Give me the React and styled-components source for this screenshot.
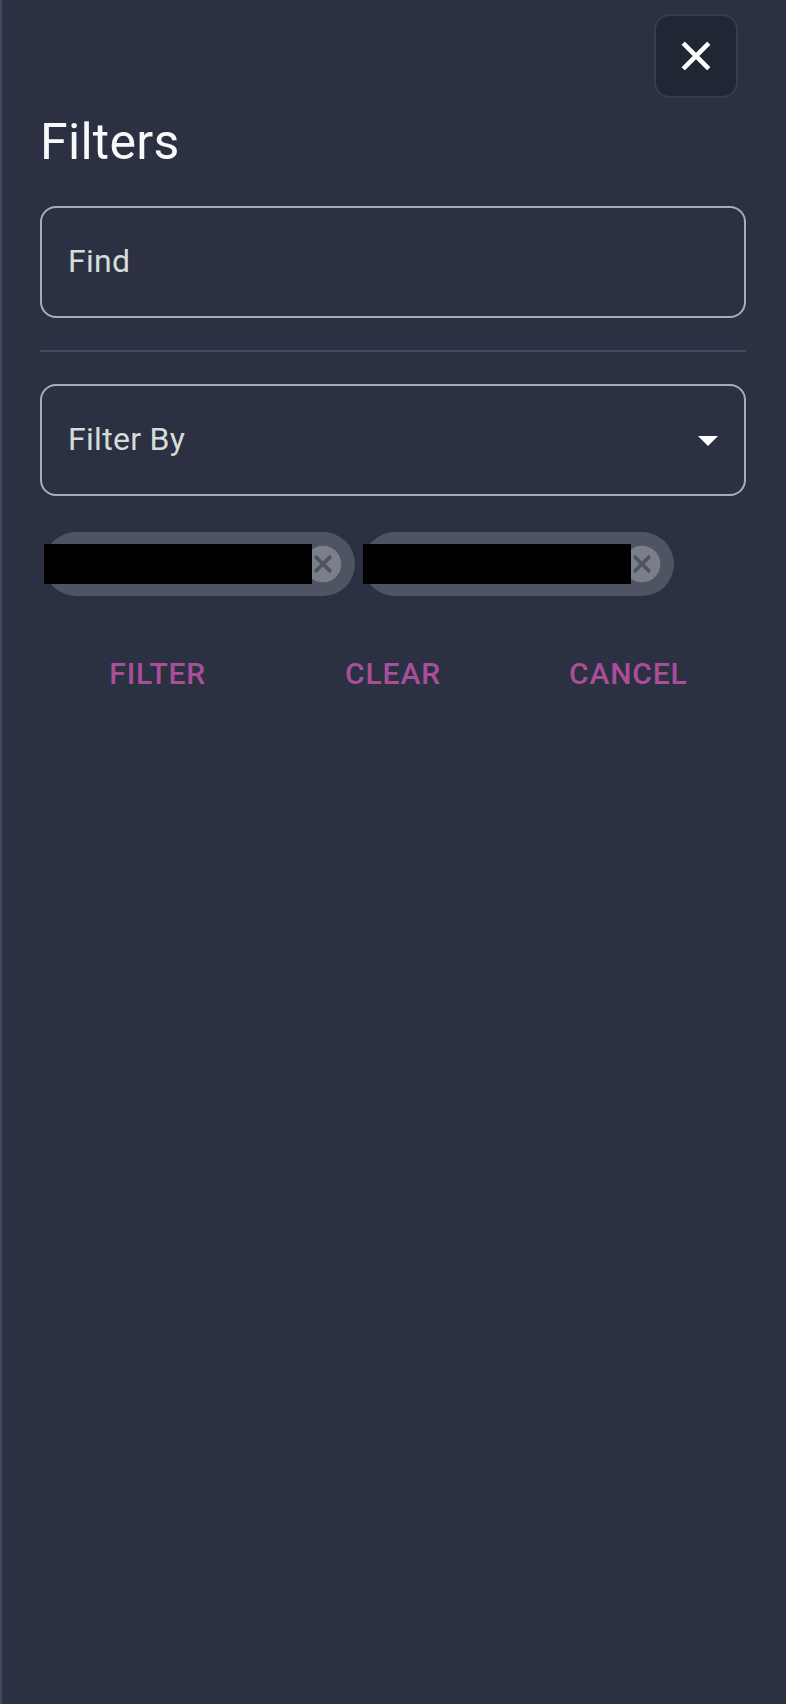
import React from "react";
import styled, { createGlobalStyle } from "styled-components";

const GlobalStyle = createGlobalStyle`
  *, *::before, *::after { box-sizing: border-box; }
  body { margin: 0; background: #2b3143; }
  button, input, select { font: inherit; letter-spacing: inherit; margin: 0; }
`;

const Drawer = styled.aside`
  min-height: 100vh;
  padding: 14px 40px 40px 38px;
  border-left: 2px solid #42475c;
  background: #2b3143;
  color: #f8f9fa;
  font-family: Roboto, "Liberation Sans", sans-serif;
  font-size: 32px;
  letter-spacing: 0.00938em;
`;

const TopBar = styled.div`
  display: flex;
  justify-content: flex-end;
  padding-right: 8px;
`;

const CloseButton = styled.button`
  display: flex;
  align-items: center;
  justify-content: center;
  width: 84px;
  height: 84px;
  padding: 0;
  border: 2px solid #393d4b;
  border-radius: 16px;
  background: #202634;
  color: #fff;
  cursor: pointer;
`;

const Title = styled.h1`
  margin: 8px 0 28px;
  font-size: 50px;
  font-weight: 400;
  line-height: 72px;
`;

const Fields = styled.form`
  display: flex;
  flex-direction: column;
`;

const Outline = styled.div`
  display: flex;
  position: relative;
  height: 112px;
  border: 2px solid #abadb4;
  border-radius: 16px;
`;

const TextField = styled.input`
  width: 100%;
  padding: 0 26px 2px;
  border: 0;
  border-radius: 14px;
  outline: 0;
  background: transparent;
  color: #d4ddd8;
  &::placeholder { color: #d4ddd8; opacity: 1; }
`;

const SelectField = styled.select`
  width: 100%;
  padding: 0 80px 2px 26px;
  border: 0;
  border-radius: 14px;
  outline: 0;
  appearance: none;
  background: transparent;
  color: #d4ddd8;
`;

const SelectArrow = styled.svg`
  position: absolute;
  top: 30px;
  right: 12px;
  pointer-events: none;
`;

const Divider = styled.hr`
  width: 100%;
  height: 2px;
  margin: 32px 0;
  border: 0;
  background: #454a5e;
`;

const Chips = styled.ul`
  display: flex;
  flex-wrap: wrap;
  gap: 8px;
  margin: 36px 0 0;
  padding: 0 4px;
  list-style: none;
`;

const Chip = styled.li`
  display: flex;
  align-items: center;
  height: 64px;
  padding-right: 10px;
  border-radius: 32px;
  background: #4e5461;
`;

const ChipLabel = styled.span`
  z-index: 1;
  width: 268px;
  height: 40px;
  background: #000;
`;

const ChipDelete = styled.button`
  display: flex;
  margin-left: -11px;
  padding: 0;
  border: 0;
  background: transparent;
  color: #7b7f8a;
  cursor: pointer;
`;

const Actions = styled.div`
  display: grid;
  grid-template-columns: repeat(3, 1fr);
  margin-top: 40px;
`;

const ActionButton = styled.button`
  height: 74px;
  padding: 0;
  border: 0;
  background: transparent;
  color: #a94f98;
  font-size: 30px;
  font-weight: 500;
  letter-spacing: 0.02857em;
  text-transform: uppercase;
  cursor: pointer;
`;

const chips = ["first", "second"];
const actions = ["Filter", "Clear", "Cancel"];

export default function App() {
  return (
    <>
      <GlobalStyle />
      <Drawer>
        <TopBar>
          <CloseButton type="button" aria-label="Close">
            <svg width="48" height="48" viewBox="0 0 24 24" fill="currentColor" stroke="currentColor" strokeWidth="0.4" strokeLinejoin="round" aria-hidden="true">
              <path d="M19 6.41 17.59 5 12 10.59 6.41 5 5 6.41 10.59 12 5 17.59 6.41 19 12 13.41 17.59 19 19 17.59 13.41 12z" />
            </svg>
          </CloseButton>
        </TopBar>
        <Title>Filters</Title>
        <Fields onSubmit={(e) => e.preventDefault()}>
          <Outline>
            <TextField type="text" aria-label="Find" placeholder="Find" />
          </Outline>
          <Divider />
          <Outline>
            <SelectField aria-label="Filter By" defaultValue="">
              <option value="">Filter By</option>
            </SelectField>
            <SelectArrow width="48" height="48" viewBox="0 0 24 24" fill="#fff" aria-hidden="true">
              <path d="m7 10 5 5 5-5z" />
            </SelectArrow>
          </Outline>
          <Chips>
            {chips.map((name) => (
              <Chip key={name}>
                <ChipLabel />
                <ChipDelete type="button" aria-label={`Remove ${name} filter`}>
                  <svg width="44" height="44" viewBox="0 0 24 24" fill="currentColor" aria-hidden="true">
                    <path d="M12 2C6.47 2 2 6.47 2 12s4.47 10 10 10 10-4.47 10-10S17.53 2 12 2zm5 13.59L15.59 17 12 13.41 8.41 17 7 15.59 10.59 12 7 8.41 8.41 7 12 10.59 15.59 7 17 8.41 13.41 12 17 15.59z" />
                  </svg>
                </ChipDelete>
              </Chip>
            ))}
          </Chips>
          <Actions>
            {actions.map((label) => (
              <ActionButton key={label} type="button">{label}</ActionButton>
            ))}
          </Actions>
        </Fields>
      </Drawer>
    </>
  );
}
